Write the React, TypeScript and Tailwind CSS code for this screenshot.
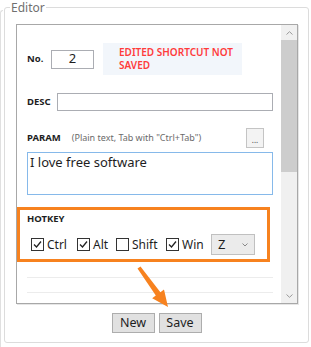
import React from "react";

function Check({ on }: { on: boolean }) {
  return (
    <span className="flex h-[13px] w-[13px] shrink-0 items-center justify-center border border-[#333] bg-white">
      {on && (
        <svg width="9" height="9" viewBox="0 0 9 9" fill="none">
          <path d="M1 4.5 L3.5 7 L8 1.5" stroke="#222" strokeWidth="1.3" />
        </svg>
      )}
    </span>
  );
}

const KEYS = [
  { label: "Ctrl", on: true, w: "w-[46px]" },
  { label: "Alt", on: true, w: "w-[39px]" },
  { label: "Shift", on: false, w: "w-[50px]" },
  { label: "Win", on: true, w: "w-[45px]" },
];

export default function App() {
  return (
    <div className="relative flex h-[347px] w-[311px] overflow-hidden bg-white font-['Noto_Sans','Open_Sans',sans-serif] text-[#1e1e1e]">
      {/* edge of the neighbouring panel */}
      <div className="mt-[10px] h-[340px] w-[3px] rounded-tl-[3px] border-l border-t border-[#e0e0e0]" />

      {/* group box */}
      <div className="relative ml-[1px] mt-[7px] flex h-[336px] w-[305px] flex-col rounded-[3px] border border-[#dcdcdc]">
        <span className="absolute -top-[7px] left-[5px] bg-white px-[1px] text-[12px] leading-[14px] text-[#707070]">
          Editor
        </span>

        {/* scroll panel */}
        <div className="ml-[11px] mt-[16px] flex h-[280px] w-[282px] border border-[#a8a8a8] shadow-[1px_1px_0_#e6e6e6]">
          <div className="flex flex-1 flex-col overflow-hidden pl-[10px] pt-[18px]">
            {/* No. + message */}
            <div className="flex h-[32px] items-center">
              <span className="w-[24px] text-[9.5px] font-bold">No.</span>
              <div className="flex h-[19px] w-[43px] items-center justify-center border border-[#abadb3] text-[13px]">
                2
              </div>
              <div className="ml-[9px] flex h-[32px] w-[139px] items-center bg-[#f2f6fb] pl-[16px] text-[10px] font-semibold leading-[13px] text-[#ff3b3b]">
                EDITED SHORTCUT NOT
                <br />
                SAVED
              </div>
            </div>

            {/* DESC */}
            <div className="mt-[18px] flex h-[18px] items-center">
              <span className="w-[30px] text-[9.5px] font-bold">DESC</span>
              <div className="h-[18px] w-[216px] border border-[#abadb3]" />
            </div>

            {/* PARAM */}
            <div className="mt-[17px] flex h-[20px] w-[246px] items-center">
              <span className="text-[9.5px] font-bold">PARAM</span>
              <span className="ml-[11px] text-[9px] text-[#6b6b6b]">(Plain text, Tab with "Ctrl+Tab")</span>
              <div className="ml-auto mr-[9px] flex h-[20px] w-[18px] items-end justify-center border border-[#c4c4c4] bg-[#f3f3f3] pb-[3px] text-[8px] leading-[8px] text-[#444]">
                ...
              </div>
            </div>
            <div className="mt-[4px] h-[43px] w-[246px] border border-[#86b9ea] px-[2px] text-[13px] leading-[18px]">
              I love free software
            </div>

            {/* HOTKEY */}
            <span className="mt-[17px] text-[9.5px] font-bold leading-[13px]">HOTKEY</span>
            <div className="mt-[9px] flex h-[21px] items-center pl-[4px] text-[12px]">
              {KEYS.map((k) => (
                <div key={k.label} className={`${k.w} flex items-center gap-[3px]`}>
                  <Check on={k.on} />
                  <span>{k.label}</span>
                </div>
              ))}
              <div className="flex h-[21px] w-[44px] items-center justify-between border border-[#c0c0c0] bg-[#ebebeb] pl-[6px] pr-[6px]">
                <span className="text-[13px]">Z</span>
                <svg width="6" height="4" viewBox="0 0 6 4">
                  <path d="M0.5 0.5 L3 3 L5.5 0.5" stroke="#888" fill="none" />
                </svg>
              </div>
            </div>

            <div className="mt-[22px] h-px w-[246px] bg-[#ececec]" />
            <div className="mt-[14px] h-px w-[246px] bg-[#ececec]" />
          </div>

          {/* scrollbar */}
          <div className="flex w-[16px] flex-col bg-[#f0f0f0]">
            <div className="flex h-[15px] items-center justify-center">
              <svg width="7" height="4" viewBox="0 0 7 4">
                <path d="M0.5 3.5 L3.5 0.7 L6.5 3.5" stroke="#9a9a9a" fill="none" />
              </svg>
            </div>
            <div className="h-[132px] bg-[#cdcdcd]" />
            <div className="flex-1" />
            <div className="flex h-[15px] items-center justify-center">
              <svg width="7" height="4" viewBox="0 0 7 4">
                <path d="M0.5 0.5 L3.5 3.3 L6.5 0.5" stroke="#9a9a9a" fill="none" />
              </svg>
            </div>
          </div>
        </div>

        {/* buttons */}
        <div className="mt-[9px] flex justify-center gap-[4px]">
          <button className="h-[20px] w-[43px] border border-[#adadad] bg-[#e1e1e1] text-[12.5px] leading-[18px]">New</button>
          <button className="h-[20px] w-[43px] border border-[#adadad] bg-[#e1e1e1] text-[12.5px] leading-[18px]">Save</button>
        </div>
      </div>

      {/* annotation: highlight box */}
      <div className="pointer-events-none absolute left-[17px] top-[207px] h-[55px] w-[253px] border-[3px] border-[#f7821f]" />

      {/* annotation: arrow */}
      <svg className="pointer-events-none absolute left-0 top-0" width="311" height="347" viewBox="0 0 311 347">
        <polygon
          points="137.5,268.5 140.5,266.5 160.4,292.2 164,289.5 168,307 152.2,298.3 155.8,295.6"
          fill="#f7821f"
        />
      </svg>
    </div>
  );
}
